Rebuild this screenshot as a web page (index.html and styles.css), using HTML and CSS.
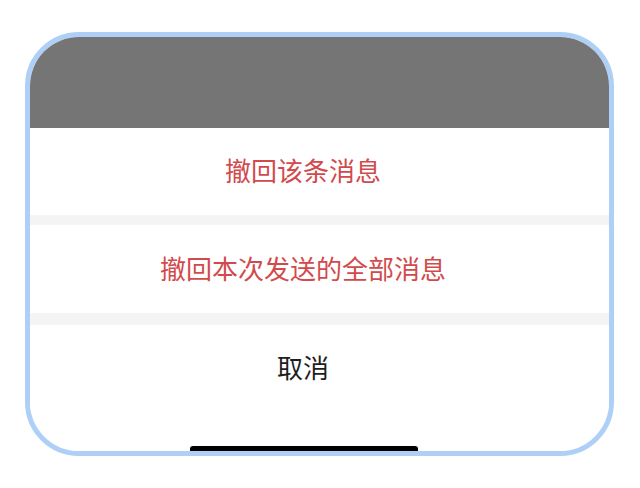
FILE: index.html
```html
<!DOCTYPE html>
<html lang="zh">
<head>
<meta charset="utf-8">
<link rel="stylesheet" href="styles.css">
</head>
<body>
<div class="phone">
  <div class="dim"></div>
  <div class="sheet">
    <div class="row danger">撤回该条消息</div>
    <div class="gap"></div>
    <div class="row row-tall danger">撤回本次发送的全部消息</div>
    <div class="gap gap-wide"></div>
    <div class="row">取消</div>
  </div>
  <div class="home"></div>
</div>
</body>
</html>
```
FILE: styles.css
```css
html, body {
  margin: 0;
  padding: 0;
  background: #ffffff;
}
body {
  width: 640px;
  height: 488px;
  overflow: hidden;
  font-family: "Noto Sans CJK SC", "Noto Sans", sans-serif;
}
.phone {
  position: relative;
  box-sizing: border-box;
  margin: 32px 0 0 25px;
  width: 589px;
  height: 424px;
  border: 5px solid #aed0f7;
  border-radius: 54px;
  overflow: hidden;
  background: #ffffff;
  display: flex;
  flex-direction: column;
}
.dim {
  height: 91px;
  flex: none;
  background: #757575;
}
.sheet {
  display: flex;
  flex-direction: column;
  background: #ffffff;
}
.row {
  box-sizing: border-box;
  height: 87px;
  display: flex;
  align-items: center;
  justify-content: center;
  padding: 0 33px 4px 0;
  font-size: 26px;
  color: #1e1e1e;
}
.row-tall {
  height: 88px;
}
.danger {
  color: #d24a4c;
}
.gap {
  height: 10px;
  background: #f4f4f4;
}
.gap-wide {
  height: 12px;
}
.home {
  position: absolute;
  left: 160px;
  bottom: 0;
  width: 228px;
  height: 5px;
  background: #000000;
  border-radius: 3px 3px 0 0;
}
```
